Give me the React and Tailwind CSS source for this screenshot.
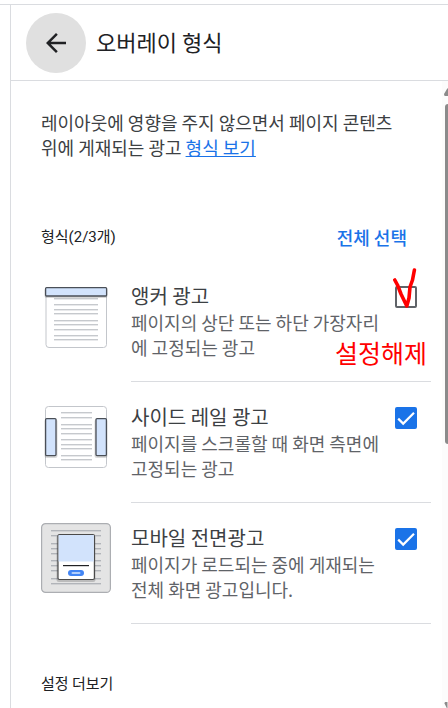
const FORMATS = [
  {
    id: "anchor",
    title: "앵커 광고",
    description: "페이지의 상단 또는 하단 가장자리에 고정되는 광고",
    checked: false,
    Art: AnchorArt,
    note: "설정해제",
  },
  {
    id: "side-rail",
    title: "사이드 레일 광고",
    description: "페이지를 스크롤할 때 화면 측면에 고정되는 광고",
    checked: true,
    Art: SideRailArt,
  },
  {
    id: "interstitial",
    title: "모바일 전면광고",
    description: "페이지가 로드되는 중에 게재되는 전체 화면 광고입니다.",
    checked: true,
    Art: InterstitialArt,
  },
];

function TextLines({ x, width, rows, color = "#c6c9cd" }) {
  return rows.map((y) => (
    <rect key={y} x={x} y={y} width={width} height="1.4" fill={color} />
  ));
}

function AnchorArt() {
  return (
    <svg viewBox="0 0 70 70" className="size-[70px] shrink-0 overflow-visible" aria-hidden="true">
      <rect x="5" y="7" width="60.5" height="59.5" rx="3" fill="#fff" stroke="#c3c6cb" />
      <TextLines x={13} width={44} rows={[17, 23, 28, 32, 39, 43, 48, 54, 58]} />
      <rect x="3.5" y="7" width="63" height="10" rx="2.5" fill="#000" opacity="0.16" />
      <rect x="4.6" y="6.6" width="61" height="8.4" rx="1" fill="#d2e3fc" stroke="#4a4f57" strokeWidth="1.3" />
    </svg>
  );
}

function SideRailArt() {
  return (
    <svg viewBox="0 0 70 70" className="size-[70px] shrink-0 overflow-visible" aria-hidden="true">
      <rect x="4.5" y="4.5" width="61" height="61" rx="3" fill="#fff" stroke="#c3c6cb" />
      <TextLines x={20} width={31} rows={[10, 15, 22, 26, 31, 37, 42, 46, 53, 57]} />
      <rect x="3.5" y="17" width="13" height="39" rx="2.5" fill="#000" opacity="0.15" />
      <rect x="53.5" y="17" width="13" height="39" rx="2.5" fill="#000" opacity="0.15" />
      <rect x="4.6" y="16.6" width="10.4" height="37" rx="1" fill="#d2e3fc" stroke="#4a4f57" strokeWidth="1.3" />
      <rect x="55" y="16.6" width="10.4" height="37" rx="1" fill="#d2e3fc" stroke="#4a4f57" strokeWidth="1.3" />
    </svg>
  );
}

function InterstitialArt() {
  return (
    <svg viewBox="0 0 70 70" className="size-[70px] shrink-0 overflow-visible" aria-hidden="true">
      <rect x="0.6" y="0.6" width="68.8" height="68.8" rx="4" fill="#e4e4e4" stroke="#acaeb2" strokeWidth="1.2" />
      <TextLines
        x={10}
        width={50}
        rows={[7, 12, 20, 25, 30, 37, 42, 47, 55, 60]}
        color="#b1b4b9"
      />
      <rect x="15.5" y="12" width="39" height="47" rx="2.5" fill="#000" opacity="0.18" />
      <rect x="17" y="11.5" width="36.4" height="45" rx="1.5" fill="#fff" stroke="#4a4a4a" strokeWidth="1.2" />
      <path d="M17.6 12.1h35.2v26.4H17.6z" fill="#d2e3fc" />
      <rect x="22" y="42" width="26" height="1.2" fill="#202124" />
      <rect x="27" y="47" width="16" height="6" rx="3" fill="#4285f4" />
      <rect x="30.5" y="49" width="9" height="2" rx="1" fill="#b3cffb" />
    </svg>
  );
}

function Checkbox({ id, defaultChecked }) {
  return (
    <span className="grid size-[22px] shrink-0">
      <input
        id={id}
        type="checkbox"
        defaultChecked={defaultChecked}
        className="peer col-start-1 row-start-1 size-[22px] appearance-none rounded-[2px] border-2 border-[#5f6368] checked:border-[#1a73e8] checked:bg-[#1a73e8]"
      />
      <svg
        viewBox="0 0 22 22"
        fill="none"
        stroke="#fff"
        strokeWidth="2.2"
        className="pointer-events-none invisible col-start-1 row-start-1 size-[22px] peer-checked:visible"
        aria-hidden="true"
      >
        <path d="M3.2 11.6 8.2 16.6 19 5.8" />
      </svg>
    </span>
  );
}

// Red pen mark and label drawn over the checkbox
function Note({ children }) {
  return (
    <>
      <svg
        viewBox="0 0 24 42"
        fill="none"
        stroke="#f00"
        strokeWidth="3.6"
        strokeLinecap="round"
        strokeLinejoin="round"
        className="pointer-events-none absolute top-[6px] right-[14px] h-[42px] w-6"
        aria-hidden="true"
      >
        <path d="M1.8 13 4.5 18 8 27 13.8 39M21.4 3 19.5 13 17 20 16 31 13.8 39" />
      </svg>
      <span className="absolute top-[75px] right-1 text-[25px] leading-8 text-[#f00]">
        {children}
      </span>
    </>
  );
}

function FormatRow({ id, title, description, checked, Art, note }) {
  return (
    <li className="flex gap-5">
      <div className="pt-5">
        <Art />
      </div>
      <div className="relative flex flex-1 gap-3 border-b border-[#dadce0] pt-[21px] pr-[14px] pb-[21px]">
        <label htmlFor={id} className="flex-1">
          <span className="block text-xl leading-7 text-[#3c4043]">{title}</span>
          <span className="block text-lg leading-[25px] text-[#5f6368]">{description}</span>
        </label>
        <div className="pt-1">
          <Checkbox id={id} defaultChecked={checked} />
        </div>
        {note && <Note>{note}</Note>}
      </div>
    </li>
  );
}

function ScrollTrack() {
  return (
    <div className="flex w-[6px] shrink-0 flex-col items-end overflow-hidden bg-[#fcfcfc] pt-[7px]" aria-hidden="true">
      <svg viewBox="0 0 4 8" className="h-2 w-1 shrink-0" fill="#8b8b8b">
        <path d="M4 0v8H1Q0 8 0 6L3 1Z" />
      </svg>
      <div className="mt-2 h-[340px] w-[3px] rounded-l bg-[#8b8b8b]" />
      <svg viewBox="0 0 4 8" className="mt-auto h-[6px] w-1 shrink-0" fill="#8b8b8b">
        <path d="M4 0H1Q0 0 0 2L3 8h1Z" />
      </svg>
    </div>
  );
}

export default function App() {
  return (
    <div className="flex min-h-screen flex-col bg-white pt-1 font-['Noto_Sans_CJK_KR',sans-serif]">
      <div className="flex flex-1 border-t border-[#dadce0] pl-[10px]">
        <main className="flex min-w-0 flex-1 flex-col border-l border-[#dadce0]">
          <header className="flex items-center gap-[10px] border-b border-[#dadce0] pt-2 pb-[7px] pl-[15px]">
            <button
              type="button"
              aria-label="뒤로"
              className="grid size-[60px] place-items-center rounded-full bg-[#e0e0e0]"
            >
              <svg viewBox="0 0 24 24" className="size-[30px]" fill="#202124" aria-hidden="true">
                <path d="M20 11H7.83l5.59-5.59L12 4l-8 8 8 8 1.41-1.41L7.83 13H20v-2z" />
              </svg>
            </button>
            <h1 className="pb-1 text-[22px] leading-8 text-[#202124]">오버레이 형식</h1>
          </header>

          <div className="flex flex-1">
            <div className="flex-1 pr-[11px] pl-[30px]">
              <p className="pt-[29px] pr-7 text-lg leading-[25px] text-[#3c4043]">
                레이아웃에 영향을 주지 않으면서 페이지 콘텐츠 위에 게재되는 광고{" "}
                <a href="#formats" className="inline-block text-[#1a73e8] underline">
                  형식 보기
                </a>
              </p>

              <div className="flex items-center justify-between pt-[63px] pr-6 pb-[10px]">
                <h2 className="font-[Roboto,'Noto_Sans_CJK_KR',sans-serif] text-[15px] leading-7 text-[#202124]">
                  형식(2/3개)
                </h2>
                <button type="button" className="text-lg leading-7 font-medium text-[#1a73e8]">
                  전체 선택
                </button>
              </div>

              <ul id="formats">
                {FORMATS.map((format) => (
                  <FormatRow key={format.id} {...format} />
                ))}
              </ul>

              <h2 className="pt-[45px] pb-2 text-[15px] leading-7 text-[#202124]">설정 더보기</h2>
            </div>
            <ScrollTrack />
          </div>
        </main>
      </div>
    </div>
  );
}
